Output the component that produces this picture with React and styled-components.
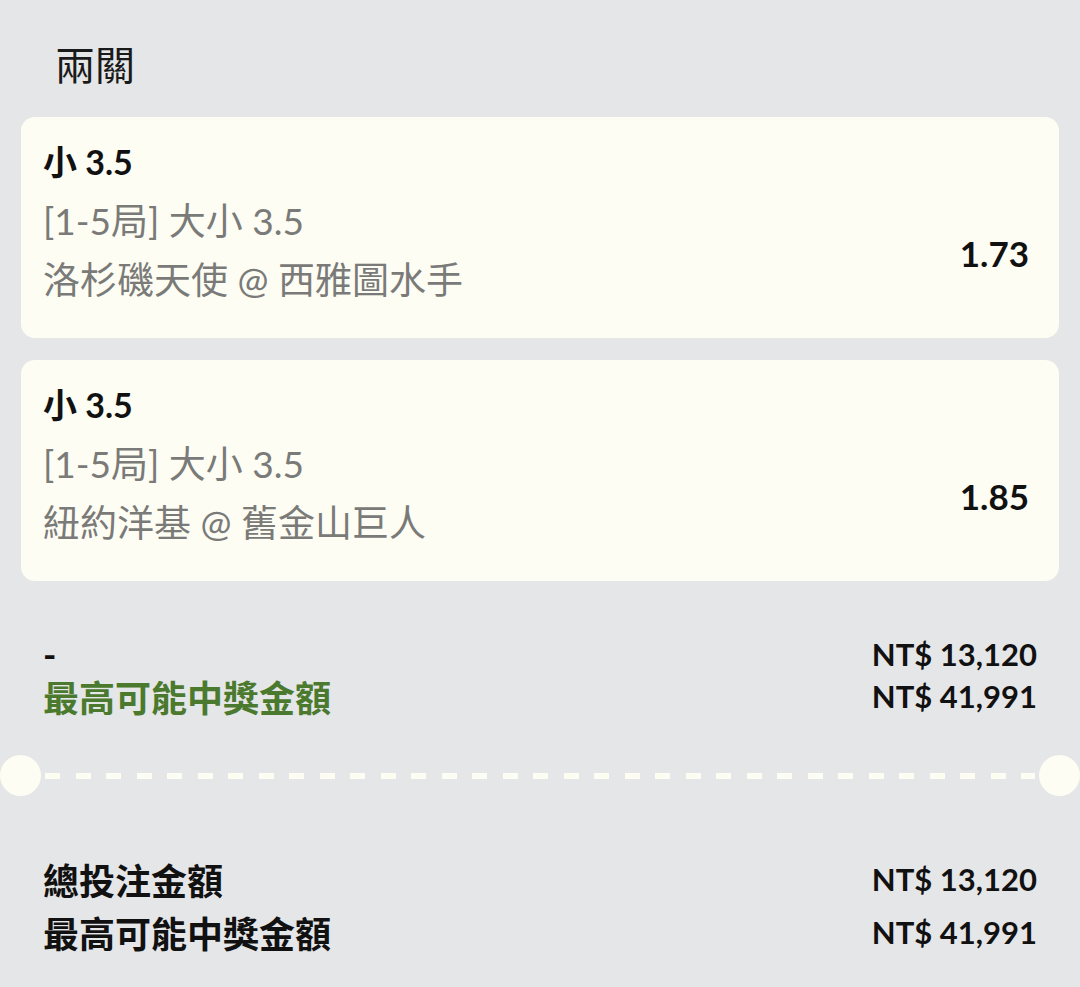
import React from "react";
import styled, { createGlobalStyle } from "styled-components";

// Глобальні стилі сторінки
const GlobalStyle = createGlobalStyle`
  html, body {
    margin: 0;
    padding: 0;
    background-color: #e5e6e8;
  }
  body {
    font-family: "Lato", "Noto Sans CJK TC", sans-serif;
    color: #111;
  }
`;

const bets = [
  {
    id: 1,
    pick: "小 3.5",
    market: "[1-5局] 大小 3.5",
    match: "洛杉磯天使 @ 西雅圖水手",
    odds: "1.73"
  },
  {
    id: 2,
    pick: "小 3.5",
    market: "[1-5局] 大小 3.5",
    match: "紐約洋基 @ 舊金山巨人",
    odds: "1.85"
  }
];

export default function App() {
  return (
    <Page>
      <GlobalStyle />
      <Title>兩關</Title>
      <CardList>{bets.map(BetCard)}</CardList>

      <Summary>
        <SummaryRow>
          <Label>-</Label>
          <Amount>NT$ 13,120</Amount>
        </SummaryRow>
        <SummaryRow>
          <Label green>最高可能中獎金額</Label>
          <Amount>NT$ 41,991</Amount>
        </SummaryRow>
      </Summary>

      <Divider>
        <Notch />
        <Dashes />
        <Notch />
      </Divider>

      <Totals>
        <TotalRow>
          <Label>總投注金額</Label>
          <Amount>NT$ 13,120</Amount>
        </TotalRow>
        <TotalRow>
          <Label>最高可能中獎金額</Label>
          <Amount>NT$ 41,991</Amount>
        </TotalRow>
      </Totals>
    </Page>
  );
}

// Одна карточка ставки
function BetCard({ id, pick, market, match, odds }) {
  return (
    <Card key={id}>
      <Info>
        <Pick>{pick}</Pick>
        <Line>{market}</Line>
        <Line>{match}</Line>
      </Info>
      <Odds>{odds}</Odds>
    </Card>
  );
}

const Page = styled.div`
  width: 1080px;
  min-height: 987px;
  background-color: #e5e6e8;
`;

const Title = styled.div`
  padding: 45px 55px 32px;
  font-size: 40px;
  line-height: 40px;
  font-weight: 400;
  color: #1a1a1a;
`;

const CardList = styled.div`
  display: flex;
  flex-direction: column;
  gap: 22px;
  padding: 0 21px;
`;

const Card = styled.div`
  display: flex;
  align-items: center;
  justify-content: space-between;
  background-color: #fdfdf3;
  border-radius: 14px;
  padding: 15px 30px 29px 22px;
`;

const Info = styled.div`
  display: flex;
  flex-direction: column;
`;

const Pick = styled.div`
  font-size: 34px;
  line-height: 59px;
  font-weight: 700;
  color: #111;
`;

const Line = styled.div`
  font-size: 37px;
  line-height: 59px;
  color: #7a7a78;
`;

/* Коефіцієнт стоїть нижче центру карточки */
const Odds = styled.div`
  padding-top: 64px;
  font-size: 35px;
  font-weight: 700;
  color: #111;
`;

// ======================================

const Summary = styled.div`
  padding: 52px 43px 0;
`;

const SummaryRow = styled.div`
  display: flex;
  justify-content: space-between;
  align-items: center;
  height: 42px;
`;

const Label = styled.div`
  font-size: 36px;
  font-weight: 700;
  color: ${({ green }) => (green ? "#4b7a2e" : "#111")};
`;

const Amount = styled.div`
  font-size: 31px;
  font-weight: 700;
  color: #111;
`;

const Divider = styled.div`
  display: flex;
  align-items: center;
  height: 41px;
  margin-top: 38px;
`;

const Notch = styled.div`
  width: 41px;
  height: 41px;
  border-radius: 50%;
  background-color: #fdfdf3;
  flex-shrink: 0;
`;

const Dashes = styled.div`
  flex: 1;
  height: 6px;
  margin: 0 4px;
  background: repeating-linear-gradient(
    to right,
    #fdfdf3 0 15px,
    transparent 15px 30.5px
  );
`;

const Totals = styled.div`
  padding: 56px 43px 0;
`;

const TotalRow = styled.div`
  display: flex;
  justify-content: space-between;
  align-items: center;
  height: 53px;
`;
